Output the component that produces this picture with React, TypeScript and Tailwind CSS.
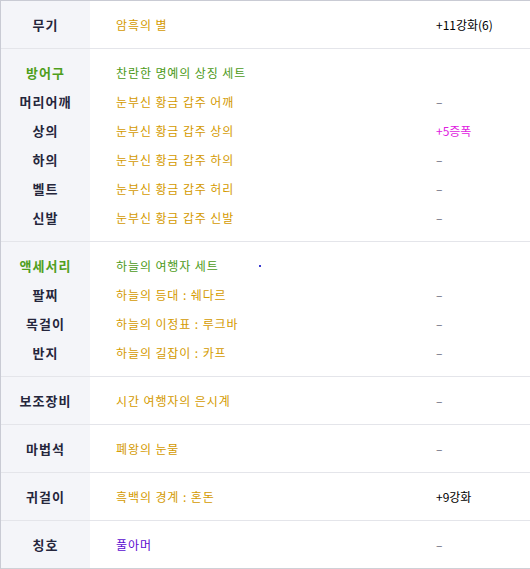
import React from 'react';

type Row = {
  label: string;
  labelColor?: string;
  name: string;
  nameColor: string;
  value?: string;
  valueColor?: string;
  dot?: boolean;
};

const groups: Row[][] = [
  [{ label: '무기', name: '암흑의 별', nameColor: 'text-[#d49a00]', value: '+11강화(6)', valueColor: 'text-black' }],
  [
    { label: '방어구', labelColor: 'text-[#4f9f1c]', name: '찬란한 명예의 상징 세트', nameColor: 'text-[#4c9a18]' },
    { label: '머리어깨', name: '눈부신 황금 갑주 어깨', nameColor: 'text-[#d49a00]', value: '–' },
    { label: '상의', name: '눈부신 황금 갑주 상의', nameColor: 'text-[#d49a00]', value: '+5증폭', valueColor: 'text-[#e020e0]' },
    { label: '하의', name: '눈부신 황금 갑주 하의', nameColor: 'text-[#d49a00]', value: '–' },
    { label: '벨트', name: '눈부신 황금 갑주 허리', nameColor: 'text-[#d49a00]', value: '–' },
    { label: '신발', name: '눈부신 황금 갑주 신발', nameColor: 'text-[#d49a00]', value: '–' },
  ],
  [
    { label: '액세서리', labelColor: 'text-[#4f9f1c]', name: '하늘의 여행자 세트', nameColor: 'text-[#4c9a18]', dot: true },
    { label: '팔찌', name: '하늘의 등대 : 쉐다르', nameColor: 'text-[#d49a00]', value: '–' },
    { label: '목걸이', name: '하늘의 이정표 : 루크바', nameColor: 'text-[#d49a00]', value: '–' },
    { label: '반지', name: '하늘의 길잡이 : 카프', nameColor: 'text-[#d49a00]', value: '–' },
  ],
  [{ label: '보조장비', name: '시간 여행자의 은시계', nameColor: 'text-[#d49a00]', value: '–' }],
  [{ label: '마법석', name: '폐왕의 눈물', nameColor: 'text-[#d49a00]', value: '–' }],
  [{ label: '귀걸이', name: '흑백의 경계 : 혼돈', nameColor: 'text-[#d49a00]', value: '+9강화', valueColor: 'text-black' }],
  [{ label: '칭호', name: '풀아머', nameColor: 'text-[#5a0bd0]', value: '–' }],
];

const App = () => {
  return (
    <div className="w-[530px] h-[569px] bg-white font-['Noto_Sans_CJK_KR','Noto_Sans',sans-serif] text-[12px] leading-none">
      <div className="border-t border-l border-[#c9cbd4] border-b-2 border-b-[#cfd0d6]">
        {groups.map((rows, gi) => (
          <div
            key={gi}
            className={`flex ${gi < groups.length - 1 ? 'border-b border-[#e4e5ea]' : ''}`}
          >
            <div className={`w-[89px] shrink-0 bg-[#f4f5f9] ${rows.length > 1 ? 'py-[9px]' : ''}`}>
              {rows.map((r, i) => (
                <div
                  key={i}
                  className={`flex items-center justify-center font-bold text-[13px] tracking-[1px] ${rows.length > 1 ? 'h-[29px]' : 'h-[47px]'} ${r.labelColor ?? 'text-[#25263c]'}`}
                >
                  {r.label}
                </div>
              ))}
            </div>
            <div className={`flex-1 ${rows.length > 1 ? 'py-[9px]' : ''}`}>
              {rows.map((r, i) => (
                <div key={i} className={`flex items-center ${rows.length > 1 ? 'h-[29px]' : 'h-[47px]'}`}>
                  <div className={`w-[346px] pl-[26px] flex items-center tracking-[0.9px] ${r.nameColor}`}>
                    {r.name}
                    {r.dot && <span className="ml-[40px] w-[2px] h-[2px] bg-[#3a3ad0]" />}
                  </div>
                  <div className={`${r.valueColor ?? 'text-[#6b6b7e]'}`}>{r.value ?? ''}</div>
                </div>
              ))}
            </div>
          </div>
        ))}
      </div>
    </div>
  );
};

export default App;
